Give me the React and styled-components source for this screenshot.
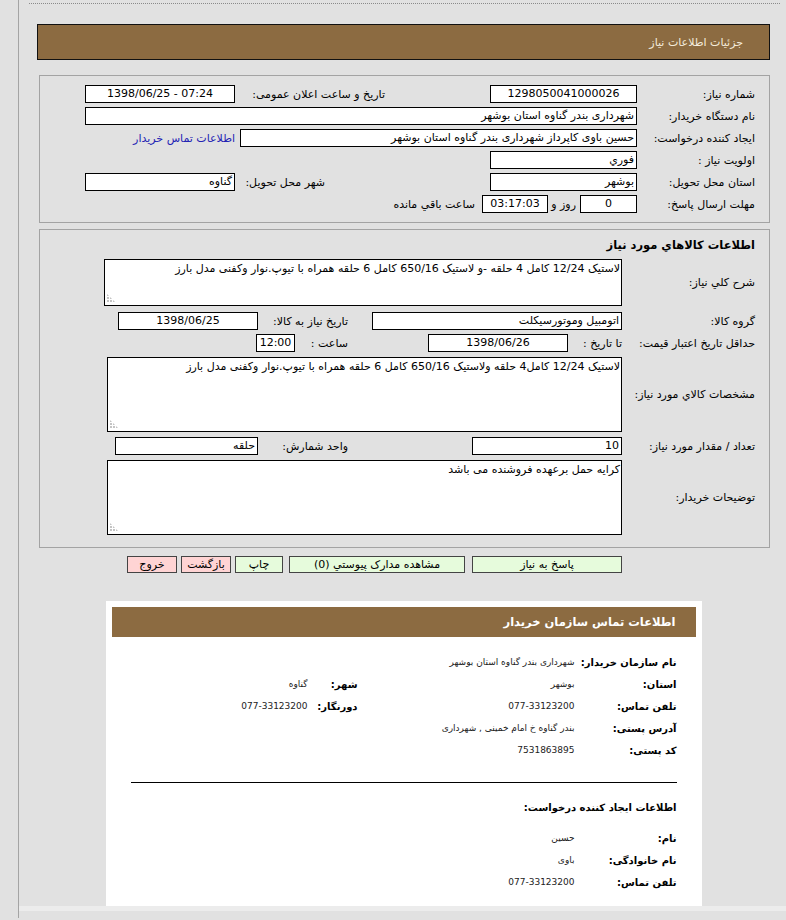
import React from "react";
import styled, { createGlobalStyle } from "styled-components";

const GlobalStyle = createGlobalStyle`
  html, body {
    margin: 0;
    padding: 0;
    background: #e1e1e1;
  }
  body {
    font-family: "DejaVu Sans", Tahoma, sans-serif;
    font-size: 11px;
    color: #000;
  }
`;

const Page = styled.div`
  padding-left: 18px;
`;

const Frame = styled.div`
  border-left: 1px solid #a4a4a4;
  min-height: 918px;
  box-sizing: border-box;
  padding-top: 3px;
`;

const DottedRule = styled.div`
  margin: 0 6px 0 10px;
  border-top: 1px dotted #8a8a8a;
`;

const Content = styled.div`
  direction: rtl;
  width: 733px;
  margin: 20px 0 0 18px;
`;

const HeaderBar = styled.div`
  height: 36px;
  box-sizing: border-box;
  display: flex;
  align-items: center;
  padding-right: 26px;
  background: #8c6b41;
  border: 1px solid #111;
  color: #f4ecdc;
  font-size: 11px;
`;

const Panel = styled.div`
  width: 731px;
  box-sizing: border-box;
  margin-top: ${(p) => p.$top}px;
  padding: ${(p) => p.$pad};
  border: 1px solid #a3a3a3;
`;

const Row = styled.div`
  display: flex;
  align-items: center;
  height: ${(p) => p.$h || 22}px;
  margin-top: ${(p) => p.$mt || 0}px;
  white-space: nowrap;
`;

const Label = styled.div`
  flex: none;
  width: ${(p) => p.$w}px;
  box-sizing: border-box;
  padding-right: ${(p) => p.$pr || 0}px;
  text-align: right;
  white-space: nowrap;
`;

const Field = styled.div`
  flex: none;
  width: ${(p) => p.$w}px;
  height: 18px;
  box-sizing: border-box;
  margin-right: ${(p) => p.$mr || 0}px;
  padding: 0 2px;
  border: 1px solid #000;
  background: #fff;
  line-height: 16px;
  direction: ${(p) => (p.$ltr ? "ltr" : "rtl")};
  text-align: ${(p) => (p.$center ? "center" : "right")};
  white-space: nowrap;
  overflow: hidden;
`;

const Link = styled.a`
  margin-right: 5px;
  color: #2323b4;
  text-decoration: none;
`;

const Note = styled.span`
  margin-right: ${(p) => p.$mr || 0}px;
`;

const Heading = styled.div`
  height: 18px;
  line-height: 18px;
  padding-right: 14px;
  font-weight: bold;
  font-size: 11.5px;
`;

const AreaRow = styled.div`
  display: flex;
  align-items: center;
  margin-top: ${(p) => p.$mt}px;
`;

const Area = styled.div`
  position: relative;
  flex: none;
  width: ${(p) => p.$w}px;
  height: ${(p) => p.$h}px;
  box-sizing: border-box;
  padding: 1px 1px;
  border: 1px solid #000;
  background: #fff;
  line-height: 16px;
  text-align: right;
  white-space: nowrap;
  overflow: hidden;

  &::after {
    content: "";
    position: absolute;
    left: 2px;
    bottom: 2px;
    width: 9px;
    height: 9px;
    background-image: radial-gradient(circle at 1px 1px, #c4c4c4 0.9px, transparent 1px);
    background-size: 3px 3px;
    clip-path: polygon(0 0, 0 100%, 100% 100%);
  }
`;

const ButtonRow = styled.div`
  display: flex;
  padding-right: 148px;
  margin-top: 8px;
`;

const Button = styled.button`
  width: ${(p) => p.$w}px;
  height: 17px;
  margin-left: ${(p) => p.$gap || 0}px;
  padding: 0;
  border: 1px solid #444;
  background: ${(p) => (p.$tone === "pink" ? "#ffd4d4" : "#e6fbdc")};
  font-family: inherit;
  font-size: 11px;
  line-height: 15px;
  color: #000;
`;

const Card = styled.div`
  width: 596px;
  height: 305px;
  box-sizing: border-box;
  margin: 28px auto 0;
  padding: 6px;
  background: #fff;
`;

const CardBar = styled.div`
  height: 30px;
  display: flex;
  align-items: center;
  padding-right: 20px;
  background: #8c6b41;
  color: #fff;
  font-weight: bold;
  font-size: 11.5px;
`;

const CardBody = styled.div`
  padding: 14px 19px 0;
`;

const InfoGrid = styled.div`
  display: grid;
  grid-template-columns: 102px 217px 50px 1fr;
  grid-auto-rows: 22px;
  align-items: center;
  margin-top: ${(p) => p.$mt || 0}px;
`;

const InfoLabel = styled.div`
  font-weight: bold;
  font-size: 10px;
  white-space: nowrap;
`;

const InfoValue = styled.div`
  font-size: 9px;
  color: #222;
  white-space: nowrap;
  grid-column: ${(p) => (p.$wide ? "span 3" : "auto")};
`;

const Divider = styled.div`
  margin-top: 21px;
  border-top: 1px solid #000;
`;

const SubHeading = styled.div`
  margin-top: 16px;
  height: 18px;
  line-height: 18px;
  font-weight: bold;
  font-size: 10px;
`;

const BottomStrip = styled.div`
  height: 5px;
  background: #ececec;
`;

const need = [
  "لاستیک 12/24 کامل  4 حلقه -و لاستیک 650/16 کامل  6 حلقه همراه با تیوپ.نوار وکفنی مدل بارز",
  "لاستیک 12/24 کامل4 حلقه ولاستیک 650/16 کامل 6 حلقه همراه با تیوپ.نوار وکفنی مدل بارز",
  "کرایه حمل برعهده فروشنده می باشد",
];

export default function App() {
  return (
    <Page>
      <GlobalStyle />
      <Frame>
        <DottedRule />
        <Content>
          <HeaderBar>جزئیات اطلاعات نیاز</HeaderBar>

          <Panel $top={15} $pad="7px 0">
            <Row>
              <Label $w={129} $pr={14}>شماره نیاز:</Label>
              <Field $w={147} $mr={3} $center>1298050041000026</Field>
              <Label $w={252} $pr={105}>تاریخ و ساعت اعلان عمومی:</Label>
              <Field $w={150} $mr={3} $center $ltr>1398/06/25 - 07:24</Field>
            </Row>
            <Row>
              <Label $w={129} $pr={14}>نام دستگاه خریدار:</Label>
              <Field $w={552} $mr={3}>شهرداری بندر گناوه استان بوشهر</Field>
            </Row>
            <Row>
              <Label $w={129} $pr={14}>ایجاد کننده درخواست:</Label>
              <Field $w={397} $mr={3}>حسین باوی کاپرداز شهرداری بندر گناوه استان بوشهر</Field>
              <Link href="#">اطلاعات تماس خریدار</Link>
            </Row>
            <Row>
              <Label $w={129} $pr={14}>اولویت نیاز :</Label>
              <Field $w={147} $mr={3}>فوري</Field>
            </Row>
            <Row>
              <Label $w={129} $pr={14}>استان محل تحویل:</Label>
              <Field $w={147} $mr={3}>بوشهر</Field>
              <Label $w={252} $pr={165}>شهر محل تحویل:</Label>
              <Field $w={150} $mr={3}>گناوه</Field>
            </Row>
            <Row>
              <Label $w={129} $pr={14}>مهلت ارسال پاسخ:</Label>
              <Field $w={57} $mr={3} $center>0</Field>
              <Label $w={32} $pr={4}>روز و</Label>
              <Field $w={66} $center $ltr>03:17:03</Field>
              <Note $mr={7}>ساعت باقي مانده</Note>
            </Row>
          </Panel>

          <Panel $top={6} $pad="6px 0 12px">
            <Heading>اطلاعات کالاهاي مورد نياز</Heading>
            <AreaRow $mt={5}>
              <Label $w={147} $pr={14}>شرح کلي نياز:</Label>
              <Area $w={518} $h={47}>{need[0]}</Area>
            </AreaRow>
            <Row $mt={4}>
              <Label $w={147} $pr={14}>گروه کالا:</Label>
              <Field $w={250}>اتومبيل وموتورسيکلت</Field>
              <Label $w={114} $pr={24}>تاریخ نیاز به کالا:</Label>
              <Field $w={140} $center $ltr>1398/06/25</Field>
            </Row>
            <Row>
              <Label $w={147} $pr={14}>حداقل تاریخ اعتبار قیمت:</Label>
              <Label $w={54}>تا تاریخ :</Label>
              <Field $w={140} $center $ltr>1398/06/26</Field>
              <Label $w={133} $pr={80}>ساعت :</Label>
              <Field $w={39} $center $ltr>12:00</Field>
            </Row>
            <AreaRow $mt={3}>
              <Label $w={147} $pr={14}>مشخصات کالاي مورد نياز:</Label>
              <Area $w={515} $h={75}>{need[1]}</Area>
            </AreaRow>
            <Row $mt={3}>
              <Label $w={147} $pr={14}>تعداد / مقدار مورد نیاز:</Label>
              <Field $w={150}>10</Field>
              <Label $w={214} $pr={124}>واحد شمارش:</Label>
              <Field $w={143}>حلقه</Field>
            </Row>
            <AreaRow $mt={3}>
              <Label $w={147} $pr={14}>توضیحات خریدار:</Label>
              <Area $w={515} $h={75}>{need[2]}</Area>
            </AreaRow>
          </Panel>

          <ButtonRow>
            <Button $w={150} $gap={7}>پاسخ به نیاز</Button>
            <Button $w={176} $gap={6}>مشاهده مدارک پيوستي (0)</Button>
            <Button $w={48} $gap={4}>چاپ</Button>
            <Button $w={50} $gap={4} $tone="pink">بازگشت</Button>
            <Button $w={50} $tone="pink">خروج</Button>
          </ButtonRow>

          <Card>
            <CardBar>اطلاعات تماس سازمان خریدار</CardBar>
            <CardBody>
              <InfoGrid>
                <InfoLabel>نام سازمان خریدار:</InfoLabel>
                <InfoValue $wide>شهرداری بندر گناوه استان بوشهر</InfoValue>
                <InfoLabel>استان:</InfoLabel>
                <InfoValue>بوشهر</InfoValue>
                <InfoLabel>شهر:</InfoLabel>
                <InfoValue>گناوه</InfoValue>
                <InfoLabel>تلفن تماس:</InfoLabel>
                <InfoValue>077-33123200</InfoValue>
                <InfoLabel>دورنگار:</InfoLabel>
                <InfoValue>077-33123200</InfoValue>
                <InfoLabel>آدرس پستی:</InfoLabel>
                <InfoValue $wide>بندر گناوه خ امام خمینی , شهرداری</InfoValue>
                <InfoLabel>کد پستی:</InfoLabel>
                <InfoValue $wide>7531863895</InfoValue>
              </InfoGrid>
              <Divider />
              <SubHeading>اطلاعات ایجاد کننده درخواست:</SubHeading>
              <InfoGrid $mt={10}>
                <InfoLabel>نام:</InfoLabel>
                <InfoValue $wide>حسین</InfoValue>
                <InfoLabel>نام خانوادگی:</InfoLabel>
                <InfoValue $wide>باوی</InfoValue>
                <InfoLabel>تلفن تماس:</InfoLabel>
                <InfoValue $wide>077-33123200</InfoValue>
              </InfoGrid>
            </CardBody>
          </Card>
        </Content>
        <BottomStrip />
      </Frame>
    </Page>
  );
}
